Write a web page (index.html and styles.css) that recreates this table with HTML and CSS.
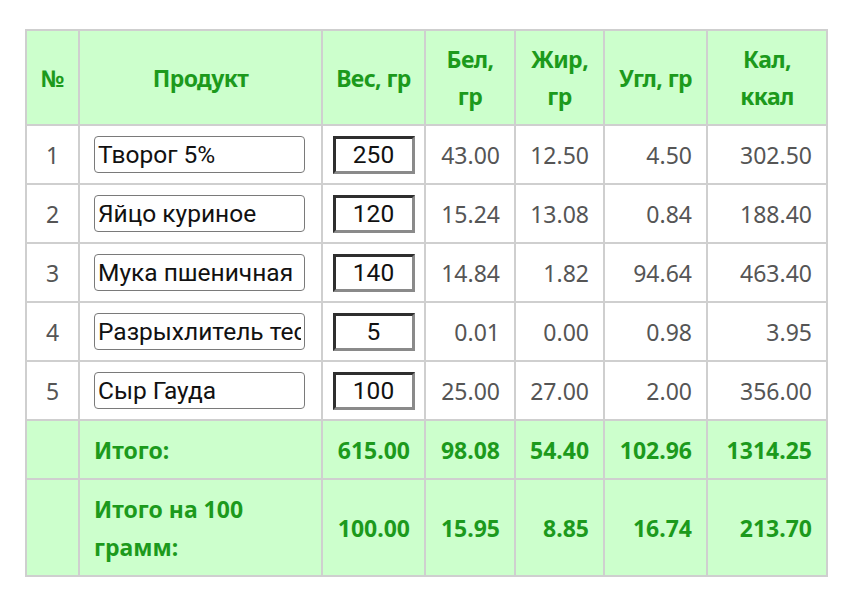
FILE: index.html
```html
<!DOCTYPE html>
<html lang="ru">
<head>
<meta charset="utf-8">
<title>Калькулятор</title>
<link rel="stylesheet" href="styles.css">
</head>
<body>
<table class="calc">
  <colgroup>
    <col class="c-num"><col class="c-prod"><col class="c-w"><col class="c-b"><col class="c-f"><col class="c-u"><col class="c-k">
  </colgroup>
  <thead>
    <tr>
      <th>№</th><th>Продукт</th><th>Вес, гр</th><th>Бел,<br>гр</th><th>Жир,<br>гр</th><th>Угл, гр</th><th>Кал,<br>ккал</th>
    </tr>
  </thead>
  <tbody>
    <tr>
      <td class="num">1</td>
      <td class="prod"><input class="name" type="text" value="Творог 5%"></td>
      <td class="wcell"><input class="weight" type="text" value="250"></td>
      <td>43.00</td><td>12.50</td><td>4.50</td><td>302.50</td>
    </tr>
    <tr>
      <td class="num">2</td>
      <td class="prod"><input class="name" type="text" value="Яйцо куриное"></td>
      <td class="wcell"><input class="weight" type="text" value="120"></td>
      <td>15.24</td><td>13.08</td><td>0.84</td><td>188.40</td>
    </tr>
    <tr>
      <td class="num">3</td>
      <td class="prod"><input class="name" type="text" value="Мука пшеничная"></td>
      <td class="wcell"><input class="weight" type="text" value="140"></td>
      <td>14.84</td><td>1.82</td><td>94.64</td><td>463.40</td>
    </tr>
    <tr>
      <td class="num">4</td>
      <td class="prod"><input class="name" type="text" value="Разрыхлитель теста"></td>
      <td class="wcell"><input class="weight" type="text" value="5"></td>
      <td>0.01</td><td>0.00</td><td>0.98</td><td>3.95</td>
    </tr>
    <tr>
      <td class="num">5</td>
      <td class="prod"><input class="name" type="text" value="Сыр Гауда"></td>
      <td class="wcell"><input class="weight" type="text" value="100"></td>
      <td>25.00</td><td>27.00</td><td>2.00</td><td>356.00</td>
    </tr>
  </tbody>
  <tfoot>
    <tr>
      <td></td><td class="label">Итого:</td>
      <td>615.00</td><td>98.08</td><td>54.40</td><td>102.96</td><td>1314.25</td>
    </tr>
    <tr>
      <td></td><td class="label">Итого на 100 грамм:</td>
      <td>100.00</td><td>15.95</td><td>8.85</td><td>16.74</td><td>213.70</td>
    </tr>
  </tfoot>
</table>
</body>
</html>
```
FILE: styles.css
```css
html, body {
  margin: 0;
  padding: 0;
  background: #ffffff;
}

body {
  padding: 29px 0 0 25px;
  font-family: "Noto Sans", "Open Sans", sans-serif;
}

.calc {
  border-collapse: collapse;
  table-layout: fixed;
  width: 801px;
  font-size: 23px;
  line-height: 38px;
  color: #555555;
}

.c-num { width: 53px; }
.c-prod { width: 243px; }
.c-w { width: 103px; }
.c-b { width: 90px; }
.c-f { width: 89px; }
.c-u { width: 103px; }
.c-k { width: 120px; }

.calc th,
.calc td {
  border: 2px solid #cfcfcf;
  padding: 10px 14px 9px 14px;
  text-align: right;
  vertical-align: middle;
}

.calc th {
  background: #ccffcc;
  color: #1c9a1c;
  font-weight: 700;
  text-align: center;
  line-height: 37px;
  padding-left: 2px;
  padding-right: 2px;
  white-space: nowrap;
  letter-spacing: -0.6px;
}

.calc tfoot td {
  background: #ccffcc;
  color: #1c9a1c;
  font-weight: 700;
}

.calc td.label {
  text-align: left;
}

.calc td.num {
  text-align: center;
}

.calc td.prod {
  padding: 0 0 0 14px;
  text-align: left;
}

.calc td.wcell {
  padding: 0;
  text-align: center;
}

.name {
  display: block;
  box-sizing: border-box;
  width: 211px;
  height: 37px;
  margin: 0;
  padding: 0 3px;
  border: 1px solid #7a7a7a;
  border-radius: 4px;
  font-family: Roboto, "Liberation Sans", sans-serif;
  font-size: 24.5px;
  color: #111111;
  background: #ffffff;
}

.weight {
  display: block;
  box-sizing: border-box;
  width: 82px;
  height: 38px;
  margin: 0 auto;
  padding: 0;
  border-style: solid;
  border-width: 3px;
  border-color: #2f2f2f #8a8a8a #8a8a8a #2f2f2f;
  font-family: Roboto, "Liberation Sans", sans-serif;
  font-size: 24.5px;
  color: #111111;
  text-align: center;
  background: #ffffff;
}
```
